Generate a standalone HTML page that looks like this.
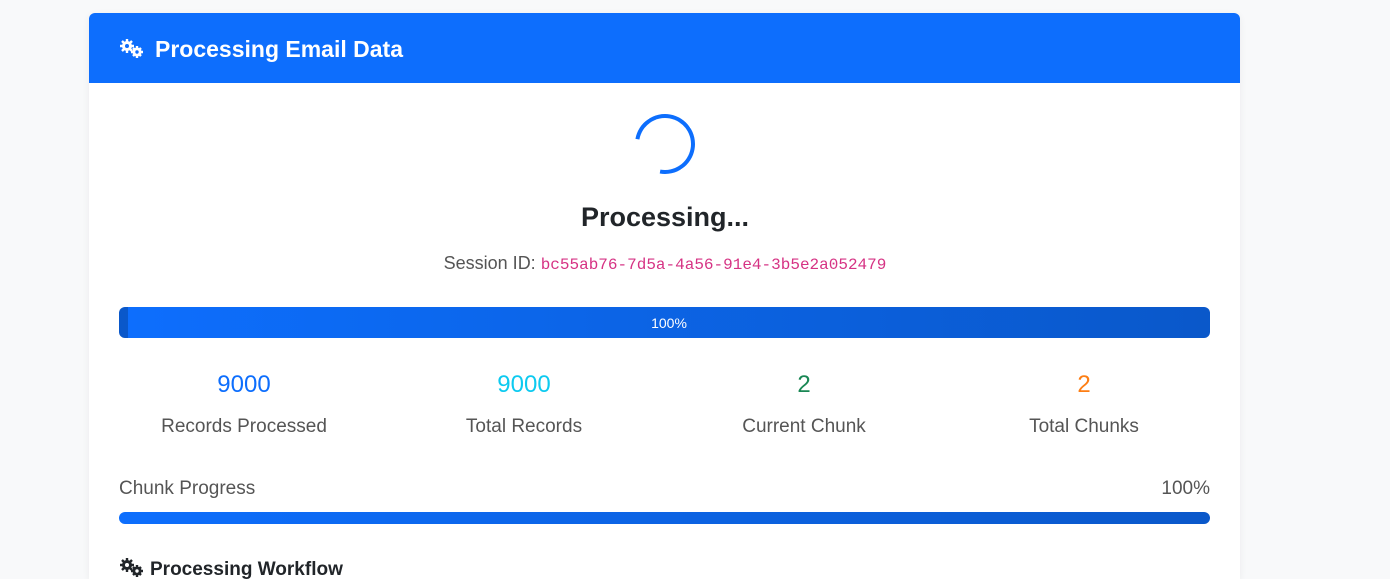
<!DOCTYPE html>
<html><head><style>
html,body{margin:0;width:1390px;height:579px;overflow:hidden}
body{background:#f8f9fa;font-family:"Liberation Sans",sans-serif;position:relative}
.card{position:absolute;left:89px;top:13px;width:1151px;height:566px;background:#fff;border-radius:6px 6px 0 0;box-shadow:0 2px 8px rgba(0,0,0,.06);overflow:hidden}
.hd{height:70px;background:#0d6efd;color:#fff;font-size:23px;font-weight:bold;display:flex;align-items:center;padding-left:30px;padding-top:2px;box-sizing:border-box}
.ab{position:absolute;white-space:nowrap}
.c{transform:translateX(-50%)}
.spin{left:546px;top:101px;width:52px;height:52px;border:4px solid #0d6efd;border-left-color:transparent;border-radius:50%;transform:rotate(-35deg)}
.bar{left:30px;width:1091px;border-radius:6px;background:linear-gradient(90deg,#0d6efd,#0a58ca)}
.num{font-size:24px;font-weight:500;top:358px}
.lbl{font-size:19px;color:#555;top:403px}
</style></head><body>
<div class="card">
<div class="hd"><svg width="26" height="20" viewBox="0 0 26 20" style="margin-right:10px"><g fill="#fff"><circle cx="8" cy="7" r="5"/><circle cx="18" cy="13" r="4.5"/></g><g stroke="#fff" stroke-width="2.4"><path d="M8 0v14M1 7h14M3 2l10 10M13 2L3 12"/><path d="M18 7v12M12 13h12M14 9l8 8M22 9l-8 8"/></g><g fill="#0d6efd"><circle cx="8" cy="7" r="2"/><circle cx="18" cy="13" r="1.7"/></g></svg>Processing Email Data</div>
<div class="ab spin"></div>
<div class="ab c" style="left:576px;top:189px;font-size:27px;font-weight:bold;color:#212529">Processing...</div>
<div class="ab c" style="left:576px;top:240px;font-size:18px;color:#555">Session ID: <span style="font-family:'Liberation Mono',monospace;font-size:16px;color:#d63384">bc55ab76-7d5a-4a56-91e4-3b5e2a052479</span></div>
<div class="ab bar" style="top:294px;height:31px;color:#fff;font-size:14px;text-align:center;line-height:33px;border-left:9px solid #0a58ca;width:1082px">100%</div>
<div class="ab c num" style="left:155px;color:#0d6efd">9000</div>
<div class="ab c num" style="left:435px;color:#0dcaf0">9000</div>
<div class="ab c num" style="left:715px;color:#198754">2</div>
<div class="ab c num" style="left:995px;color:#fd7e14">2</div>
<div class="ab c lbl" style="left:155px">Records Processed</div>
<div class="ab c lbl" style="left:435px">Total Records</div>
<div class="ab c lbl" style="left:715px">Current Chunk</div>
<div class="ab c lbl" style="left:995px">Total Chunks</div>
<div class="ab lbl" style="left:30px;top:465px">Chunk Progress</div>
<div class="ab lbl" style="right:30px;top:465px">100%</div>
<div class="ab bar" style="top:499px;height:12px"></div>
<div class="ab" style="left:30px;top:545px;font-size:19px;font-weight:bold;color:#212529"><svg width="26" height="20" viewBox="0 0 26 20" style="vertical-align:-3px;margin-right:5px"><g fill="#212529"><circle cx="8" cy="7" r="5"/><circle cx="18" cy="13" r="4.5"/></g><g stroke="#212529" stroke-width="2.4"><path d="M8 0v14M1 7h14M3 2l10 10M13 2L3 12"/><path d="M18 7v12M12 13h12M14 9l8 8M22 9l-8 8"/></g><g fill="#fff"><circle cx="8" cy="7" r="2"/><circle cx="18" cy="13" r="1.7"/></g></svg>Processing Workflow</div>
</div>
</body></html>
